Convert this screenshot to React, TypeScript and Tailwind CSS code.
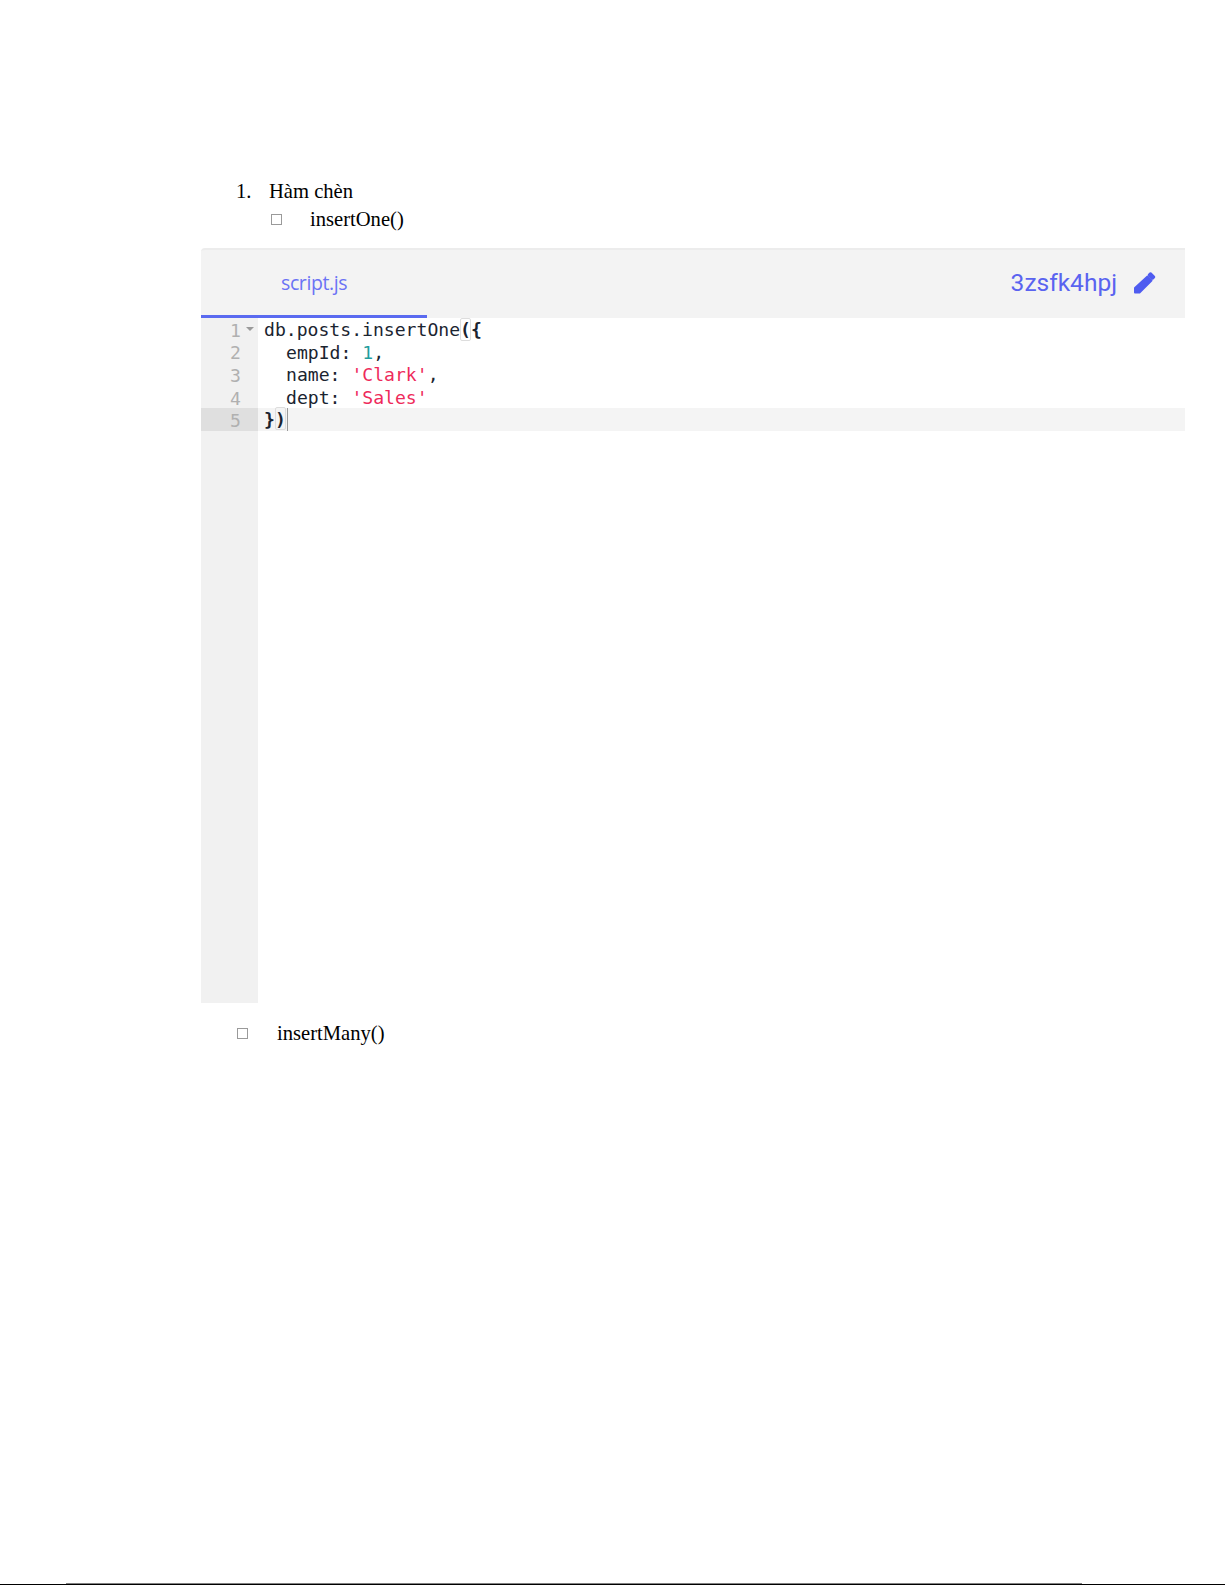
export default function App() {
  const gutter = "flex h-[22.6px] items-center justify-end pr-[17px] pt-[2px] text-[#b0b0b0]";
  const code = "h-[22.6px] whitespace-pre leading-[24.6px] text-[#1a2430]";
  return (
    <div className="flex h-[1585px] w-[1225px] flex-col overflow-hidden bg-white font-['Liberation_Serif',serif] text-[20.6px] text-black">
      <div className="h-[179px]" />
      <div className="flex h-[25px] items-center pl-[236px] leading-none">
        <span className="w-[33px]">1.</span>
        <span>Hàm chèn</span>
      </div>
      <div className="mt-[3px] flex h-[25px] items-center pl-[271px] leading-none">
        <span className="h-[11px] w-[11px] border border-[#9a9a9a]" />
        <span className="ml-[28px]">insertOne()</span>
      </div>
      <div className="ml-[201px] mt-[16px] flex h-[755px] w-[984px] flex-col">
        <div className="flex h-[70px] shrink-0 flex-col rounded-tl-[4px] border-t-2 border-[#ececec] bg-[#f3f3f3]">
          <div className="flex flex-1 items-center justify-between pr-[28px]">
            <span className="ml-[80px] mt-[1px] font-['Open_Sans',sans-serif] text-[19.5px] tracking-[-0.4px] text-[#6a72f5]">script.js</span>
            <div className="flex items-center">
              <span className="mt-[1px] font-['Roboto',sans-serif] text-[24.5px] text-[#5a63f0]">3zsfk4hpj</span>
              <svg className="ml-[16px]" width="24" height="25" viewBox="0 0 24 25" fill="#4f5cf0" stroke="#4f5cf0" strokeLinejoin="round">
                <path strokeWidth="2" d="M2 22.5V18L14.5 6.5L18.5 10.5L6.5 22.5Z" />
                <path strokeWidth="2.5" d="M17.5 3.5L21 7L19.5 8.5L16 5Z" />
              </svg>
            </div>
          </div>
          <div className="h-[3px] w-[226px] bg-[#5a6af0]" />
        </div>
        <div className="flex flex-1 font-['DejaVu_Sans_Mono',monospace] text-[18.1px]">
          <div className="w-[57px] shrink-0 bg-[#f1f1f1]">
            <div className="relative">
              <div className={gutter}>1</div>
              <span className="absolute left-[45px] top-[9px] h-0 w-0 border-x-[4px] border-t-[4px] border-x-transparent border-t-[#9a9a9a]" />
            </div>
            <div className={gutter}>2</div>
            <div className={gutter}>3</div>
            <div className={gutter}>4</div>
            <div className={`${gutter} bg-[#dfdfdf]`}>5</div>
          </div>
          <div className="flex-1">
            <div className={`${code} pl-[6px]`}>
              db.posts.insertOne<span className="relative font-bold">(<span className="absolute -top-[1px] left-0 h-[23px] w-[11px] rounded-[2px] border border-[#dddddd]" /></span><span className="font-bold">{"{"}</span>
            </div>
            <div className={`${code} pl-[28px]`}>
              empId: <span className="text-[#1f9e9e]">1</span>,
            </div>
            <div className={`${code} pl-[28px]`}>
              name: <span className="text-[#ee2a5b]">'Clark'</span>,
            </div>
            <div className={`${code} pl-[28px]`}>
              dept: <span className="text-[#ee2a5b]">'Sales'</span>
            </div>
            <div className={`${code} flex bg-[#f4f4f4] pl-[6px]`}>
              <span className="relative font-bold">{"})"}<span className="absolute -top-[1px] left-[11px] h-[23px] w-[11px] rounded-[2px] border border-[#dddddd]" /></span>
              <span className="ml-[1px] h-full w-px bg-[#9a9a9a]" />
            </div>
          </div>
        </div>
      </div>
      <div className="mt-[18px] flex h-[25px] items-center pl-[237px] leading-none">
        <span className="h-[11px] w-[11px] border border-[#9a9a9a]" />
        <span className="ml-[29px]">insertMany()</span>
      </div>
      <div className="flex-1" />
      <div className="ml-[66px] h-px w-[1016px] bg-[#808080]" />
      <div className="h-[1.5px] bg-black" />
    </div>
  );
}
